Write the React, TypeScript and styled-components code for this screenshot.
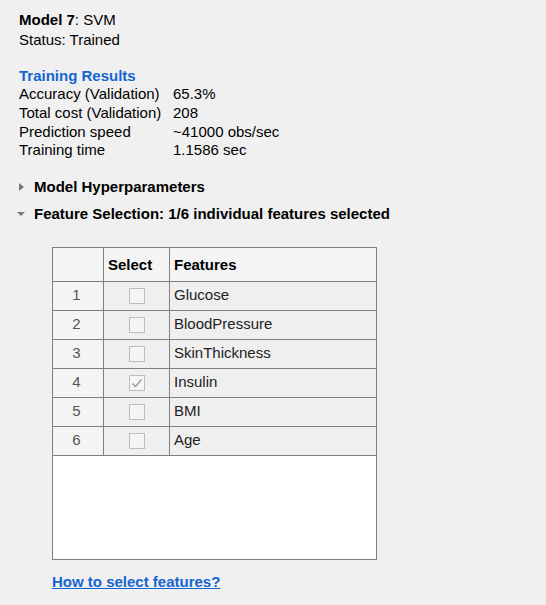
import React from "react";
import styled, { createGlobalStyle } from "styled-components";

const Global = createGlobalStyle`
  html, body { margin: 0; padding: 0; background: #f0f0f0; }
  body { font-family: "Liberation Sans", Arial, sans-serif; font-size: 15px; color: #000; }
`;

const Page = styled.div`
  padding: 10px 0 0 19px;
  width: 546px;
  height: 605px;
  box-sizing: border-box;
`;

const Line = styled.div<{ $h?: number }>`
  line-height: ${(p) => p.$h ?? 20}px;
  height: ${(p) => p.$h ?? 20}px;
  white-space: nowrap;
`;

const Bold = styled.b`
  font-weight: 700;
`;

const Results = styled.div`
  margin-top: 16.67px;
  display: grid;
  grid-template-columns: 154px auto;
  grid-auto-rows: 18.67px;
  line-height: 18.67px;
  white-space: nowrap;
`;

const ResultsTitle = styled.div`
  grid-column: 1 / span 2;
  color: #1565d0;
  font-weight: 700;
`;

const Sections = styled.div`
  margin-top: 13.5px;
`;

const SectionRow = styled.div`
  display: flex;
  align-items: center;
  height: 27px;
  font-weight: 700;
  white-space: nowrap;
`;

const Arrow = styled.span<{ $open?: boolean }>`
  width: 15px;
  display: flex;
  align-items: center;
  justify-content: flex-start;
  &::before {
    content: "";
    display: block;
    width: 0;
    height: 0;
    ${(p) =>
      p.$open
        ? `border-left: 4px solid transparent; border-right: 4px solid transparent; border-top: 4px solid #777; margin-left: -2px;`
        : `border-top: 4.5px solid transparent; border-bottom: 4.5px solid transparent; border-left: 5px solid #777; margin-left: 0px;`}
  }
`;

const TableBox = styled.div`
  margin: 19.5px 0 0 33px;
  width: 325px;
  height: 313px;
  box-sizing: border-box;
  border: 1px solid #808080;
  background: #fff;
`;

const Grid = styled.div`
  display: grid;
  grid-template-columns: 51px 66px 1fr;
  grid-template-rows: 34px repeat(6, 29px);
`;

const Cell = styled.div<{ $kind: "head" | "num" | "data"; $last?: boolean; $center?: boolean }>`
  box-sizing: border-box;
  border-bottom: 1px solid #808080;
  border-right: ${(p) => (p.$last ? "none" : "1px solid #808080")};
  background: ${(p) => (p.$kind === "data" ? "#efefef" : "#f4f4f4")};
  display: flex;
  align-items: center;
  justify-content: ${(p) => (p.$center ? "center" : "flex-start")};
  padding: ${(p) =>
    p.$kind === "head" ? "1px 4px 0" : p.$kind === "num" ? "0 3px 2px 0" : p.$center ? "0" : "0 4px 2px"};
  font-weight: ${(p) => (p.$kind === "head" ? 700 : 400)};
  color: ${(p) => (p.$kind === "num" ? "#555" : p.$kind === "head" ? "#000" : "#222")};
  white-space: nowrap;
`;

const Check = styled.span`
  width: 16px;
  height: 16px;
  box-sizing: border-box;
  border: 1px solid #bdbdbd;
  background: #f5f5f5;
  display: flex;
  align-items: center;
  justify-content: center;
`;

const HelpLink = styled.a`
  display: inline-block;
  margin: 13px 0 0 33px;
  color: #1565d0;
  font-weight: 700;
  text-decoration: underline;
  line-height: 18px;
  cursor: pointer;
`;

const features = [
  { name: "Glucose", on: false },
  { name: "BloodPressure", on: false },
  { name: "SkinThickness", on: false },
  { name: "Insulin", on: true },
  { name: "BMI", on: false },
  { name: "Age", on: false },
];

export default function App() {
  return (
    <>
      <Global />
      <Page>
        <Line>
          <Bold>Model 7</Bold>: SVM
        </Line>
        <Line>Status: Trained</Line>
        <Results>
          <ResultsTitle>Training Results</ResultsTitle>
          <div>Accuracy (Validation)</div>
          <div>65.3%</div>
          <div>Total cost (Validation)</div>
          <div>208</div>
          <div>Prediction speed</div>
          <div>~41000 obs/sec</div>
          <div>Training time</div>
          <div>1.1586 sec</div>
        </Results>
        <Sections>
          <SectionRow>
            <Arrow />
            Model Hyperparameters
          </SectionRow>
          <SectionRow>
            <Arrow $open />
            Feature Selection: 1/6 individual features selected
          </SectionRow>
        </Sections>
        <TableBox>
          <Grid>
            <Cell $kind="head" />
            <Cell $kind="head">Select</Cell>
            <Cell $kind="head" $last>
              Features
            </Cell>
            {features.map((f, i) => (
              <React.Fragment key={f.name}>
                <Cell $kind="num" $center>
                  {i + 1}
                </Cell>
                <Cell $kind="data" $center>
                  <Check>
                    {f.on && (
                      <svg width="14" height="14" viewBox="0 0 14 14">
                        <polyline
                          points="2.5,7.5 5.5,10.5 11.5,3.5"
                          fill="none"
                          stroke="#9a9a9a"
                          strokeWidth="1.4"
                        />
                      </svg>
                    )}
                  </Check>
                </Cell>
                <Cell $kind="data" $last>
                  {f.name}
                </Cell>
              </React.Fragment>
            ))}
          </Grid>
        </TableBox>
        <HelpLink>How to select features?</HelpLink>
      </Page>
    </>
  );
}
